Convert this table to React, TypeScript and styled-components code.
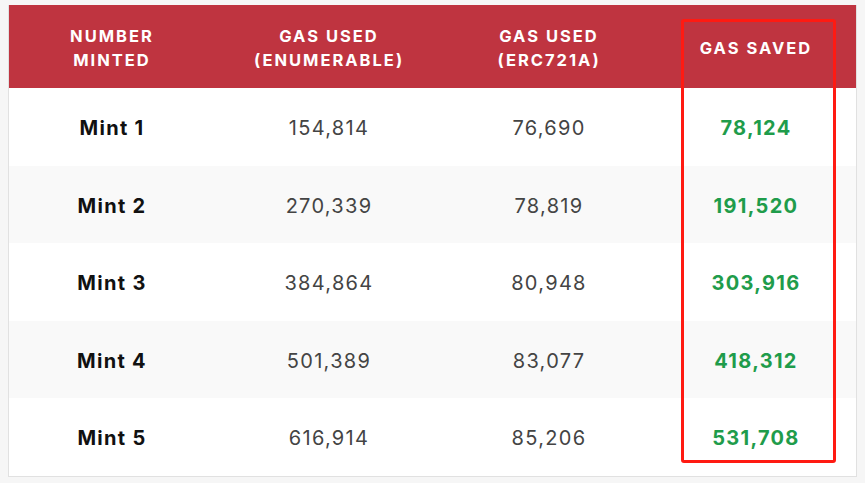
import React from "react";
import styled, { createGlobalStyle } from "styled-components";

const Global = createGlobalStyle`
  html, body { margin: 0; padding: 0; background: #f6f6f6; }
  body { font-family: Inter, "Open Sans", Arial, sans-serif; }
`;

const Page = styled.div`
  width: 865px;
  height: 483px;
  padding: 5px 0 0 8px;
  box-sizing: border-box;
`;

const TableBox = styled.div`
  position: relative;
  width: 849px;
  border: 1px solid #e1e1e1;
  border-top: none;
  background: #fff;
  box-sizing: border-box;
`;

const cols = "206px 228px 212px 202px";

const HeadRow = styled.div`
  display: grid;
  grid-template-columns: ${cols};
  height: 83px;
  background: #bf3440;
`;

const HeadCell = styled.div`
  display: flex;
  align-items: center;
  justify-content: center;
  text-align: center;
  color: #ffffff;
  font-family: Inter, "Open Sans", sans-serif;
  font-weight: 700;
  font-size: 16.5px;
  line-height: 24px;
  letter-spacing: 2px;
  text-transform: uppercase;
  padding-top: 3px;
`;

const Row = styled.div<{ $alt?: boolean }>`
  display: grid;
  grid-template-columns: ${cols};
  height: 77.5px;
  background: ${(p) => (p.$alt ? "#f9f9f9" : "#ffffff")};
`;

const Cell = styled.div<{ $kind?: "label" | "num" | "saved" }>`
  display: flex;
  align-items: center;
  justify-content: center;
  padding-top: 3px;
  font-family: Inter, "Open Sans", sans-serif;
  font-size: 20px;
  letter-spacing: 1.3px;
  font-weight: ${(p) => (p.$kind === "num" ? 400 : 700)};
  color: ${(p) =>
    p.$kind === "saved" ? "#1f9c4b" : p.$kind === "label" ? "#111111" : "#444444"};
`;

const Highlight = styled.div`
  position: absolute;
  left: 672px;
  top: 14px;
  width: 155px;
  height: 444px;
  border: 3px solid #ff1a12;
  border-radius: 3px;
  box-sizing: border-box;
  pointer-events: none;
`;

const data = [
  ["Mint 1", "154,814", "76,690", "78,124"],
  ["Mint 2", "270,339", "78,819", "191,520"],
  ["Mint 3", "384,864", "80,948", "303,916"],
  ["Mint 4", "501,389", "83,077", "418,312"],
  ["Mint 5", "616,914", "85,206", "531,708"],
];

export default function App() {
  return (
    <>
      <Global />
      <Page>
        <TableBox>
          <HeadRow>
            <HeadCell>
              Number
              <br />
              Minted
            </HeadCell>
            <HeadCell>
              Gas Used
              <br />
              (Enumerable)
            </HeadCell>
            <HeadCell>
              Gas Used
              <br />
              (ERC721A)
            </HeadCell>
            <HeadCell>Gas Saved</HeadCell>
          </HeadRow>
          {data.map((r, i) => (
            <Row key={r[0]} $alt={i % 2 === 1}>
              <Cell $kind="label">{r[0]}</Cell>
              <Cell $kind="num">{r[1]}</Cell>
              <Cell $kind="num">{r[2]}</Cell>
              <Cell $kind="saved">{r[3]}</Cell>
            </Row>
          ))}
          <Highlight />
        </TableBox>
      </Page>
    </>
  );
}
